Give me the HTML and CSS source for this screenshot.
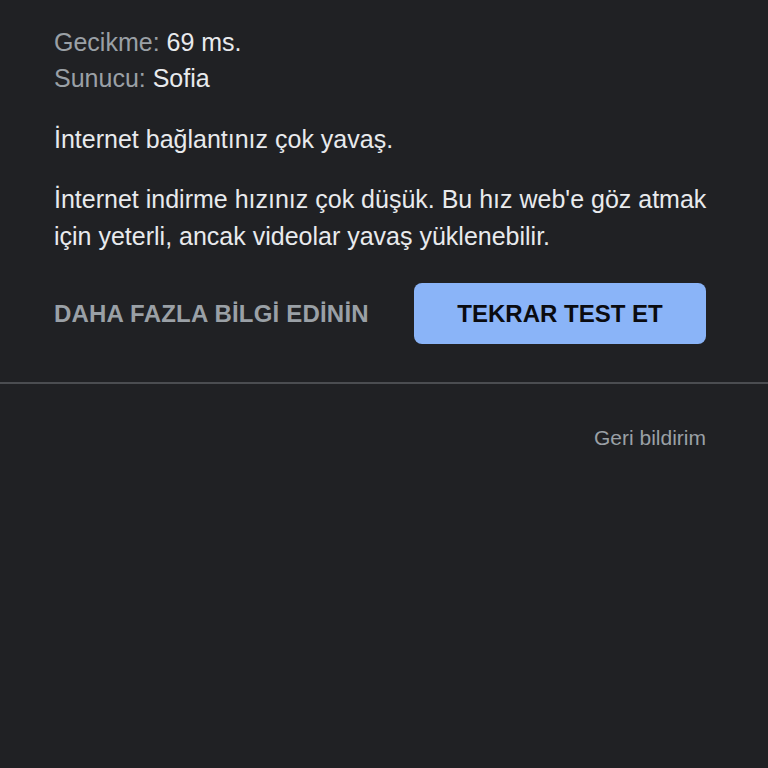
FILE: index.html
```html
<!DOCTYPE html>
<html lang="tr">
<head>
    <meta charset="UTF-8">
    <meta name="viewport" content="width=device-width, initial-scale=1.0">
    <title>Hız testi</title>
    <link rel="stylesheet" href="styles.css">
</head>
<body>
    <div class="result">
        <div class="stats">
            <div class="stat"><span class="label">Gecikme:</span> 69 ms.</div>
            <div class="stat"><span class="label">Sunucu:</span> Sofia</div>
        </div>
        <p class="summary">İnternet bağlantınız çok yavaş.</p>
        <p class="detail">İnternet indirme hızınız çok düşük. Bu hız web'e göz atmak için yeterli, ancak videolar yavaş yüklenebilir.</p>
        <div class="actions">
            <a class="more-link" href="#">DAHA FAZLA BİLGİ EDİNİN</a>
            <button class="retest">TEKRAR TEST ET</button>
        </div>
    </div>
    <div class="footer">
        <a class="feedback" href="#">Geri bildirim</a>
    </div>
</body>
</html>
```

FILE: styles.css
```css
body {
    margin: 0;
    background-color: #202124;
    color: #e8eaed;
    font-family: "Liberation Sans", Arial, sans-serif;
    height: 768px;
}
.result {
    padding: 24px 62px 38px 54px;
    border-bottom: 2px solid #4b4d51;
}
.stats {
    font-size: 25px;
    line-height: 36px;
}
.label {
    color: #9aa0a6;
}
.summary, .detail {
    font-size: 25px;
    line-height: 37px;
    margin: 0;
}
.summary {
    margin-top: 25px;
}
.detail {
    margin-top: 23px;
    margin-right: -10px;
}
.actions {
    display: flex;
    justify-content: space-between;
    align-items: center;
    margin-top: 28px;
}
.more-link {
    color: #9aa0a6;
    font-weight: bold;
    font-size: 24px;
    letter-spacing: 0.2px;
    text-decoration: none;
}
.retest {
    width: 292px;
    height: 61px;
    background-color: #8ab4f8;
    color: #0b0c10;
    border: none;
    border-radius: 8px;
    font-family: inherit;
    font-weight: bold;
    font-size: 24px;
}
.footer {
    display: flex;
    justify-content: flex-end;
    padding: 42px 62px 0 54px;
}
.feedback {
    color: #9aa0a6;
    font-size: 21px;
    text-decoration: none;
}
```
